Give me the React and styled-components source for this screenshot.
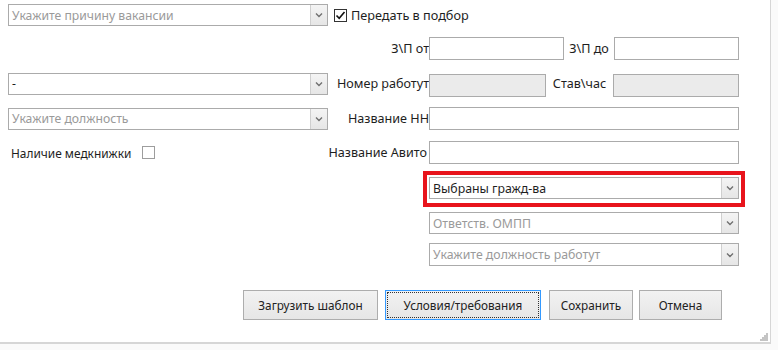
import React from "react";
import styled, { createGlobalStyle } from "styled-components";

const Global = createGlobalStyle`
  html, body { margin: 0; padding: 0; background: #fafafa; }
  body { font-family: "Noto Sans", "Open Sans", sans-serif; font-size: 12px; color: #1e1e1e; }
`;

const Form = styled.div`
  position: relative;
  width: 771px;
  height: 344px;
  box-sizing: border-box;
  background: #fff;
  border-right: 1px solid #d6d6d6;
  border-bottom: 2px solid #d6d6d6;
  padding: 4px 0 0 8px;
  display: flex;
  flex-direction: column;
`;

const Row = styled.div`
  display: flex;
  align-items: center;
  height: ${(p) => p.$h || 23}px;
  margin-top: ${(p) => p.$mt || 0}px;
`;

const Spacer = styled.div`
  width: ${(p) => p.$w}px;
  flex: none;
`;

const Label = styled.div`
  width: ${(p) => p.$w}px;
  flex: none;
  text-align: ${(p) => p.$align || "right"};
  white-space: nowrap;
  font-size: 12.6px;
  color: #1e1e1e;
  padding-right: ${(p) => p.$pr || 0}px;
  box-sizing: border-box;
`;

const Input = styled.div`
  width: ${(p) => p.$w}px;
  height: ${(p) => p.$h || 23}px;
  flex: none;
  box-sizing: border-box;
  border: 1px solid #ababab;
  background: ${(p) => (p.$disabled ? "#ebebeb" : "#fff")};
  margin-top: ${(p) => p.$mt || 0}px;
`;

const SelectBox = styled.div`
  width: ${(p) => p.$w}px;
  height: ${(p) => p.$h || 22}px;
  flex: none;
  box-sizing: border-box;
  border: 1px solid #ababab;
  background: #fff;
  display: flex;
  align-items: stretch;
`;

const SelectText = styled.div`
  flex: 1;
  padding-left: 3px;
  display: flex;
  align-items: center;
  font-size: ${(p) => (p.$big ? 12.3 : 12.2)}px;
  color: ${(p) => (p.$placeholder ? "#9a9a9a" : "#1e1e1e")};
  white-space: nowrap;
  overflow: hidden;
`;

const Arrow = styled.div`
  width: 16px;
  flex: none;
  border-left: 1px solid #cfcfcf;
  background: linear-gradient(#f4f4f4, #e6e6e6);
  display: flex;
  align-items: center;
  justify-content: center;
`;

const Chevron = () => (
  <svg width="8" height="6" viewBox="0 0 8 6">
    <path d="M1 1.5 L4 4.5 L7 1.5" fill="none" stroke="#707070" strokeWidth="1.4" />
  </svg>
);

const Select = ({ w, h, text, placeholder, big }) => (
  <SelectBox $w={w} $h={h}>
    <SelectText $placeholder={placeholder} $big={big}>{text}</SelectText>
    <Arrow>
      <Chevron />
    </Arrow>
  </SelectBox>
);

const CheckBox = styled.div`
  width: 13px;
  height: 13px;
  box-sizing: border-box;
  border: 1px solid ${(p) => (p.$checked ? "#333" : "#9d9d9d")};
  background: #fff;
  flex: none;
  display: flex;
  align-items: center;
  justify-content: center;
  margin-left: ${(p) => p.$ml || 0}px;
  margin-right: ${(p) => p.$mr || 0}px;
`;

const CheckText = styled.span`
  font-size: ${(p) => p.$size || 12.7}px;
  color: #1e1e1e;
  white-space: nowrap;
`;

const Highlight = styled.div`
  width: 322px;
  height: 36px;
  box-sizing: border-box;
  border: 4px solid #e8141c;
  padding: 2px;
  margin-left: 415px;
  margin-top: 7px;
  display: flex;
`;

const SelectRow = styled.div`
  margin-left: ${(p) => p.$ml}px;
  margin-top: ${(p) => p.$mt}px;
  display: flex;
`;

const Buttons = styled.div`
  display: flex;
  margin-left: 235px;
  margin-top: 24px;
`;

const Button = styled.div`
  width: ${(p) => p.$w}px;
  height: 30px;
  box-sizing: border-box;
  margin-right: ${(p) => p.$mr || 0}px;
  border: 1px solid ${(p) => (p.$focus ? "#3399ff" : "#adadad")};
  background: linear-gradient(#f2f2f2, #e6e6e6);
  display: flex;
  align-items: center;
  justify-content: center;
  font-size: 11.75px;
  color: #222;
  padding: 1px;
  white-space: nowrap;
`;

const FocusRing = styled.div`
  flex: 1;
  align-self: stretch;
  border: 1px dotted #333;
  display: flex;
  align-items: center;
  justify-content: center;
`;

const Grip = styled.svg`
  position: absolute;
  right: 2px;
  bottom: 1px;
`;

const MedRow = styled.div`
  display: flex;
  align-items: center;
  padding-left: 3px;
`;

export default function App() {
  return (
    <>
      <Global />
      <Form>
        <Row $h={22}>
          <Select w={320} text="Укажите причину вакансии" placeholder />
          <CheckBox $checked $ml={6} $mr={4}>
            <svg width="11" height="11" viewBox="0 0 11 11">
              <path d="M1.5 5.5 L4.2 8.3 L9.5 2" fill="none" stroke="#111" strokeWidth="1.6" />
            </svg>
          </CheckBox>
          <CheckText>Передать в подбор</CheckText>
        </Row>
        <Row $mt={11}>
          <Spacer $w={320} />
          <Label $w={101}>З\П от</Label>
          <Input $w={135} />
          <Label $w={50} $align="center">З\П до</Label>
          <Input $w={125} />
        </Row>
        <Row $mt={11} $h={25}>
          <Select w={320} h={22} text="-" />
          <Label $w={101}>Номер работут</Label>
          <Input $w={117} $disabled $mt={3} />
          <Label $w={67} $align="center">Став\час</Label>
          <Input $w={126} $disabled $mt={3} />
        </Row>
        <Row $mt={11}>
          <Select w={320} h={22} text="Укажите должность" placeholder />
          <Label $w={101}>Название НН</Label>
          <Input $w={310} />
        </Row>
        <Row $mt={11}>
          <Spacer $w={320}>
            <MedRow>
              <CheckText $size={11.9}>Наличие медкнижки</CheckText>
              <CheckBox $ml={11} />
            </MedRow>
          </Spacer>
          <Label $w={101} $pr={2}>Название Авито</Label>
          <Input $w={310} />
        </Row>
        <Highlight>
          <Select w={310} text="Выбраны гражд-ва" big />
        </Highlight>
        <SelectRow $ml={421} $mt={5}>
          <Select w={310} text="Ответств. ОМПП" placeholder big />
        </SelectRow>
        <SelectRow $ml={421} $mt={9}>
          <Select w={310} h={23} text="Укажите должность работут" placeholder big />
        </SelectRow>
        <Buttons>
          <Button $w={135} $mr={7}>Загрузить шаблон</Button>
          <Button $w={156} $mr={8} $focus>
            <FocusRing>Условия/требования</FocusRing>
          </Button>
          <Button $w={84} $mr={6}>Сохранить</Button>
          <Button $w={83}>Отмена</Button>
        </Buttons>
        <Grip width="8" height="8" viewBox="0 0 8 8">
          {[
            [6, 0], [4, 2], [6, 2], [2, 4], [4, 4], [6, 4], [0, 6], [2, 6], [4, 6], [6, 6],
          ].map(([x, y], i) => (
            <rect key={i} x={x} y={y} width="2" height="2" fill="#c4c4c4" />
          ))}
        </Grip>
      </Form>
    </>
  );
}
